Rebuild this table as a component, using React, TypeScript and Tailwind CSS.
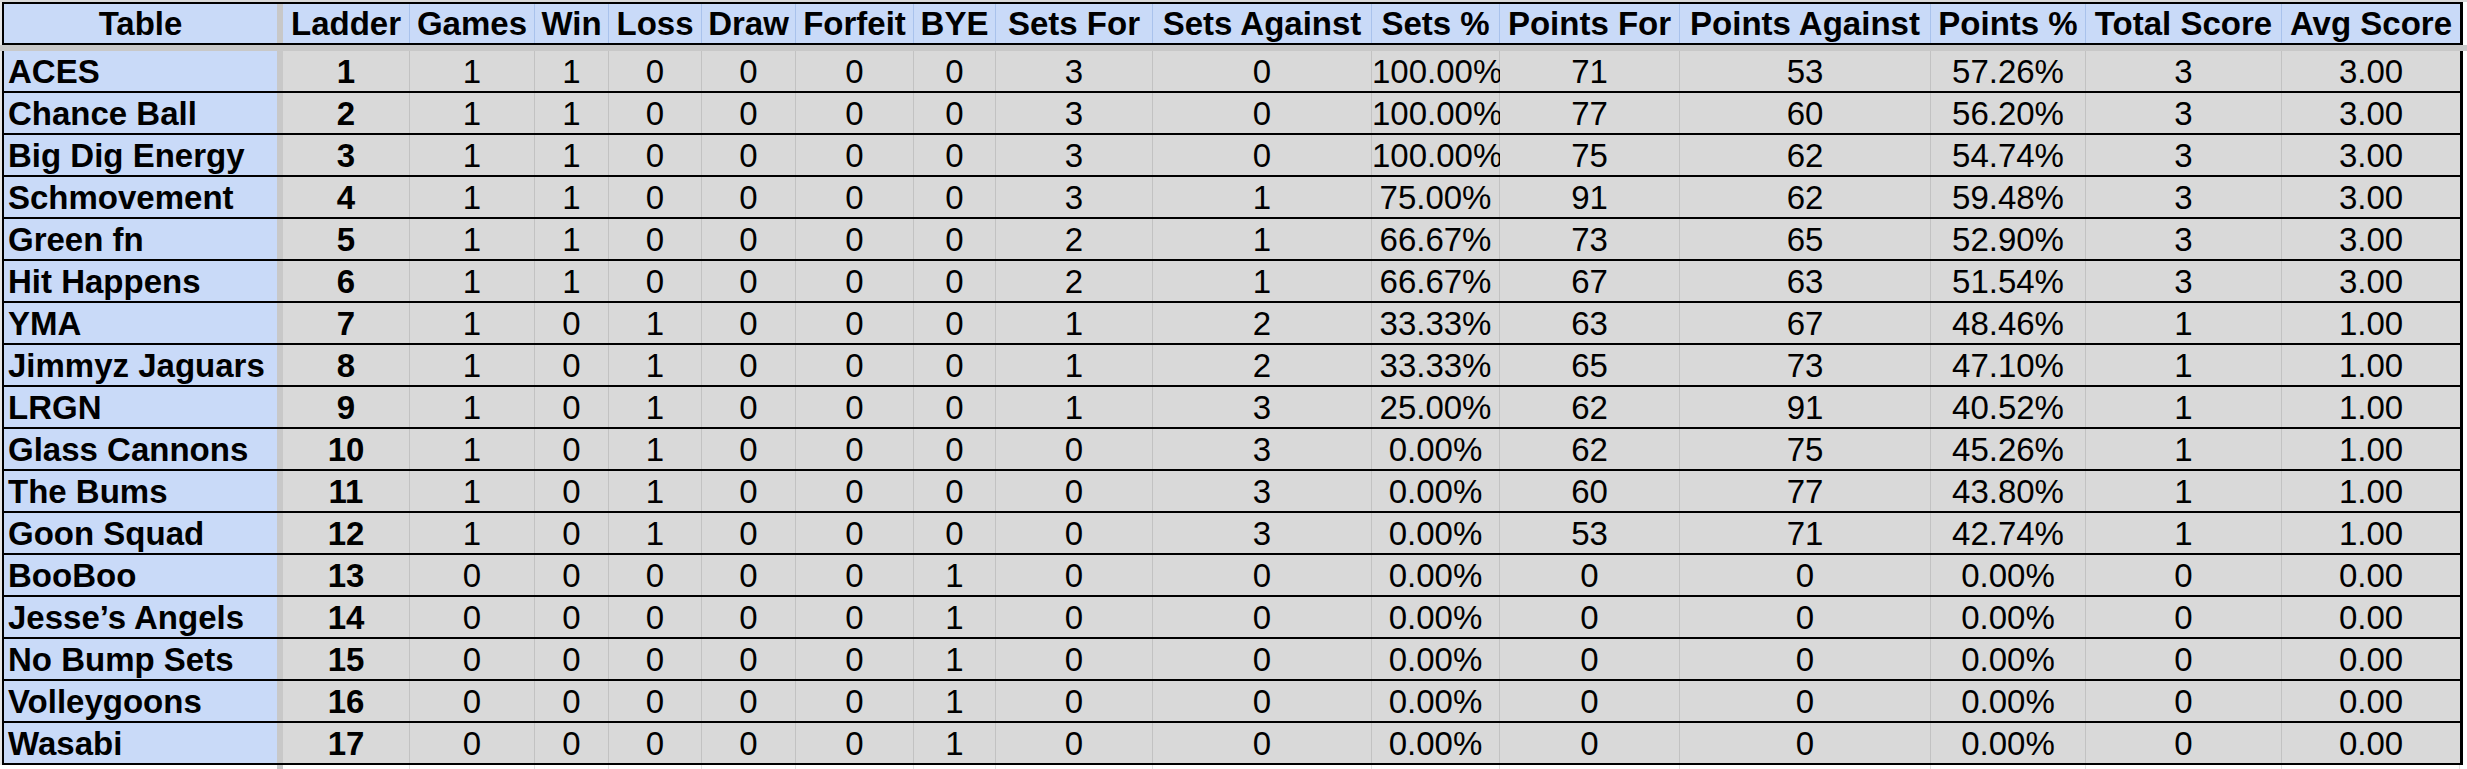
import React from "react";

const cols: { label: string; w: string }[] = [
  { label: "Ladder", w: "w-[127px]" },
  { label: "Games", w: "w-[125px]" },
  { label: "Win", w: "w-[74px]" },
  { label: "Loss", w: "w-[93px]" },
  { label: "Draw", w: "w-[94px]" },
  { label: "Forfeit", w: "w-[118px]" },
  { label: "BYE", w: "w-[82px]" },
  { label: "Sets For", w: "w-[157px]" },
  { label: "Sets Against", w: "w-[219px]" },
  { label: "Sets %", w: "w-[128px]" },
  { label: "Points For", w: "w-[180px]" },
  { label: "Points Against", w: "w-[251px]" },
  { label: "Points %", w: "w-[155px]" },
  { label: "Total Score", w: "w-[196px]" },
  { label: "Avg Score", w: "w-[178px]" },
];

const rows: string[][] = [
  ["ACES", "1", "1", "1", "0", "0", "0", "0", "3", "0", "100.00%", "71", "53", "57.26%", "3", "3.00"],
  ["Chance Ball", "2", "1", "1", "0", "0", "0", "0", "3", "0", "100.00%", "77", "60", "56.20%", "3", "3.00"],
  ["Big Dig Energy", "3", "1", "1", "0", "0", "0", "0", "3", "0", "100.00%", "75", "62", "54.74%", "3", "3.00"],
  ["Schmovement", "4", "1", "1", "0", "0", "0", "0", "3", "1", "75.00%", "91", "62", "59.48%", "3", "3.00"],
  ["Green fn", "5", "1", "1", "0", "0", "0", "0", "2", "1", "66.67%", "73", "65", "52.90%", "3", "3.00"],
  ["Hit Happens", "6", "1", "1", "0", "0", "0", "0", "2", "1", "66.67%", "67", "63", "51.54%", "3", "3.00"],
  ["YMA", "7", "1", "0", "1", "0", "0", "0", "1", "2", "33.33%", "63", "67", "48.46%", "1", "1.00"],
  ["Jimmyz Jaguars", "8", "1", "0", "1", "0", "0", "0", "1", "2", "33.33%", "65", "73", "47.10%", "1", "1.00"],
  ["LRGN", "9", "1", "0", "1", "0", "0", "0", "1", "3", "25.00%", "62", "91", "40.52%", "1", "1.00"],
  ["Glass Cannons", "10", "1", "0", "1", "0", "0", "0", "0", "3", "0.00%", "62", "75", "45.26%", "1", "1.00"],
  ["The Bums", "11", "1", "0", "1", "0", "0", "0", "0", "3", "0.00%", "60", "77", "43.80%", "1", "1.00"],
  ["Goon Squad", "12", "1", "0", "1", "0", "0", "0", "0", "3", "0.00%", "53", "71", "42.74%", "1", "1.00"],
  ["BooBoo", "13", "0", "0", "0", "0", "0", "1", "0", "0", "0.00%", "0", "0", "0.00%", "0", "0.00"],
  ["Jesse\u2019s Angels", "14", "0", "0", "0", "0", "0", "1", "0", "0", "0.00%", "0", "0", "0.00%", "0", "0.00"],
  ["No Bump Sets", "15", "0", "0", "0", "0", "0", "1", "0", "0", "0.00%", "0", "0", "0.00%", "0", "0.00"],
  ["Volleygoons", "16", "0", "0", "0", "0", "0", "1", "0", "0", "0.00%", "0", "0", "0.00%", "0", "0.00"],
  ["Wasabi", "17", "0", "0", "0", "0", "0", "1", "0", "0", "0.00%", "0", "0", "0.00%", "0", "0.00"],
];

export default function App() {
  return (
    <div
      className="w-[2467px] h-[769px] bg-white text-black overflow-hidden"
      style={{ fontFamily: '"Liberation Sans", Arial, sans-serif' }}
    >
      <div className="h-[2px] bg-[#d9d9d9]" />
      <div className="flex">
        <div className="w-[2px] bg-[#e6e6e6]" />
        {/* header */}
        <div className="flex border-y-2 border-l-2 border-r-[3px] border-black bg-[#c9daf8]">
          <div className="w-[273px] h-[39px] pt-[2px] leading-[36px] text-[33px] font-bold text-center">
            Table
          </div>
          <div className="w-[6px] bg-[#c8c8c8]" />
          {cols.map((c, i) => (
            <div
              key={c.label}
              className={`${c.w} h-[39px] pt-[2px] leading-[36px] text-[33px] font-bold text-center whitespace-nowrap overflow-visible ${
                i < cols.length - 1 ? "border-r border-[#a9c2ec]" : ""
              }`}
            >
              {c.label}
            </div>
          ))}
        </div>
      </div>
      <div className="h-[6px] bg-[#c8c8c8]" />
      <div className="flex">
        <div className="w-[2px] bg-[#e6e6e6]" />
        <div className="flex flex-col border-l-2 border-r-[3px] border-black">
          {rows.map((r) => (
            <div key={r[0]} className="flex border-b-2 border-black">
              <div className="w-[273px] h-[40px] pt-[3px] pl-[4px] leading-[36px] text-[33px] font-bold bg-[#c9daf8] whitespace-nowrap">
                {r[0]}
              </div>
              <div className="w-[6px] bg-[#c8c8c8]" />
              {cols.map((c, i) => (
                <div
                  key={c.label}
                  className={`${c.w} h-[40px] pt-[3px] leading-[36px] text-[33px] text-center bg-[#d9d9d9] whitespace-nowrap ${
                    i === 0 ? "font-bold" : ""
                  } ${i < cols.length - 1 ? "border-r border-[#c2c2c2]" : ""}`}
                >
                  {r[i + 1]}
                </div>
              ))}
            </div>
          ))}
        </div>
      </div>
      <div className="flex h-[6px]">
        <div className="w-[4px]" />
        <div className="w-[273px]" />
        <div className="w-[6px] bg-[#c8c8c8]" />
        {cols.map((c) => (
          <div key={c.label} className={`${c.w} border-r border-[#e2e2e2]`} />
        ))}
      </div>
    </div>
  );
}
